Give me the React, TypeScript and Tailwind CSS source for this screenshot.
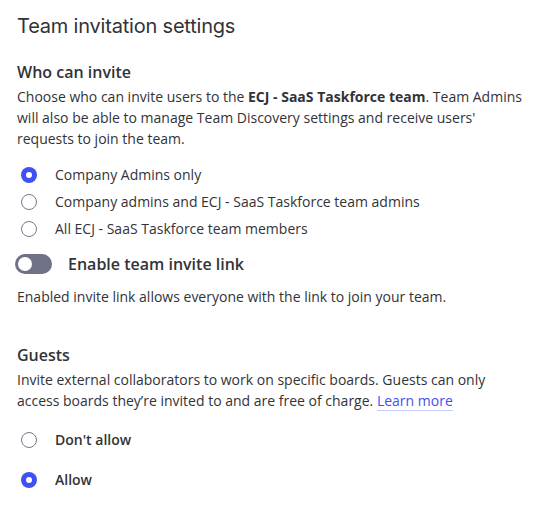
import { useState } from 'react';

type Opt = { id: string; label: string };

const inviteOptions: Opt[] = [
  { id: 'admins', label: 'Company Admins only' },
  { id: 'team-admins', label: 'Company admins and ECJ - SaaS Taskforce team admins' },
  { id: 'members', label: 'All ECJ - SaaS Taskforce team members' },
];

function Radio({ checked, onClick, label, bold }: { checked: boolean; onClick: () => void; label: string; bold?: boolean }) {
  return (
    <button type="button" onClick={onClick} className="flex h-[27px] items-center text-left">
      <span
        className={
          checked
            ? 'ml-[4px] flex h-4 w-4 items-center justify-center rounded-full bg-[#3f51f2]'
            : 'ml-[4px] h-4 w-4 rounded-full border border-[#777a8c] bg-white'
        }
      >
        {checked && <span className="h-[6px] w-[6px] rounded-full bg-white" />}
      </span>
      <span className={bold ? 'ml-[18px] text-[14px] font-semibold text-[#323338]' : 'ml-[18px] text-[14px] text-[#323338]'}>
        {label}
      </span>
    </button>
  );
}

export default function App() {
  const [invite, setInvite] = useState('admins');
  const [linkOn, setLinkOn] = useState(false);
  const [guests, setGuests] = useState('allow');

  return (
    <div className="min-h-screen bg-white px-[17px] pt-3 font-['Open_Sans',sans-serif] text-[#323338]">
      <h1 className="font-['Inter',sans-serif] text-[20px] leading-7 font-normal tracking-[-0.2px]">Team invitation settings</h1>

      <h2 className="mt-5 text-[16px] leading-6 font-semibold">Who can invite</h2>
      <p className="mt-[2px] text-[14px] leading-[21px]">
        Choose who can invite users to the <b className="font-bold">ECJ - SaaS Taskforce team</b>. Team Admins will also be able to
        manage Team Discovery settings and receive users' requests to join the team.
      </p>

      <div className="mt-3 flex flex-col">
        {inviteOptions.map((o) => (
          <Radio key={o.id} checked={invite === o.id} onClick={() => setInvite(o.id)} label={o.label} />
        ))}
      </div>

      <div className="mt-[10px] -ml-[2px] flex h-6 items-center">
        <button
          type="button"
          onClick={() => setLinkOn(!linkOn)}
          className={
            linkOn
              ? 'flex h-5 w-[37px] items-center justify-end rounded-full bg-[#3f51f2] px-[3px]'
              : 'flex h-5 w-[37px] items-center rounded-full bg-[#6f7287] px-[3px]'
          }
        >
          <span className="h-[14px] w-[14px] rounded-full bg-white" />
        </button>
        <span className="ml-4 text-[16px] font-semibold">Enable team invite link</span>
      </div>
      <p className="mt-[10px] text-[14px] leading-[21px]">Enabled invite link allows everyone with the link to join your team.</p>

      <h2 className="mt-9 text-[16px] leading-6 font-semibold">Guests</h2>
      <p className="mt-[2px] text-[14px] leading-[21px]">
        Invite external collaborators to work on specific boards. Guests can only access boards they’re invited to and are free of
        charge.{' '}
        <a href="#" className="border-b border-[#c5cbfb] text-[#3f51f2]">
          Learn more
        </a>
      </p>

      <div className="mt-[15px] flex flex-col gap-[13px]">
        <Radio checked={guests === 'none'} onClick={() => setGuests('none')} label="Don't allow" bold />
        <Radio checked={guests === 'allow'} onClick={() => setGuests('allow')} label="Allow" bold />
      </div>
    </div>
  );
}
